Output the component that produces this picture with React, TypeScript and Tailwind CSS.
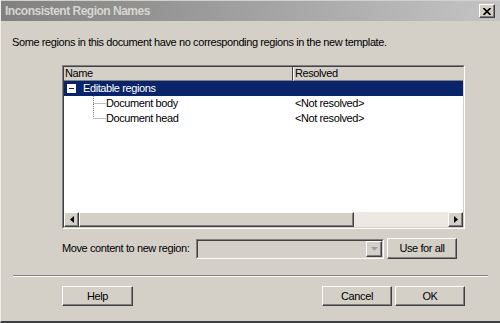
import React from "react";

const raised =
  "border border-t-white border-l-white border-r-[#404040] border-b-[#404040] shadow-[inset_-1px_-1px_0_#808080]";

function Button({ label, className = "" }: { label: string; className?: string }) {
  return (
    <div
      className={`flex items-center justify-center bg-[#d4d0c8] text-[11px] tracking-[-0.4px] text-black ${raised} ${className}`}
    >
      {label}
    </div>
  );
}

function ArrowBtn({ dir }: { dir: "left" | "right" }) {
  return (
    <div className={`w-[15px] h-[15px] flex items-center justify-center bg-[#d4d0c8] ${raised}`}>
      <svg width="4" height="7" viewBox="0 0 4 7">
        {dir === "left" ? (
          <path d="M4 0 L0 3.5 L4 7 Z" fill="#000" />
        ) : (
          <path d="M0 0 L4 3.5 L0 7 Z" fill="#000" />
        )}
      </svg>
    </div>
  );
}

export default function App() {
  return (
    <div
      className="w-[500px] h-[323px] bg-[#d4d0c8] flex flex-col border-l border-l-[#f0eee8] border-b-2 border-b-[#404040] overflow-hidden tracking-[-0.4px]"
      style={{ fontFamily: '"Liberation Sans", Arial, sans-serif' }}
    >
      {/* title bar */}
      <div className="h-[20px] mt-[1px] flex items-center justify-between pl-[4px] pr-[5px] bg-gradient-to-r from-[#808080] to-[#c4c4c4]">
        <span className="text-[12px] font-bold text-[#d8d6d0] tracking-[-0.5px]">
          Inconsistent Region Names
        </span>
        <div className={`w-[16px] h-[14px] bg-[#d4d0c8] flex items-center justify-center ${raised}`}>
          <svg width="8" height="7" viewBox="0 0 8 7">
            <path d="M0.5 0 L7.5 7 M7.5 0 L0.5 7" stroke="#000" strokeWidth="1.6" />
          </svg>
        </div>
      </div>

      <div className="pl-[11px] mt-[15px] text-[11px] leading-[13px] text-black whitespace-nowrap">
        Some regions in this document have no corresponding regions in the new template.
      </div>

      {/* list */}
      <div className="ml-[61px] mt-[16px] w-[403px] h-[164px] border border-t-[#808080] border-l-[#808080] border-r-white border-b-white">
        <div className="w-full h-full border border-t-[#404040] border-l-[#404040] border-r-[#d4d0c8] border-b-[#d4d0c8] bg-white flex flex-col text-[11px] text-black">
          <div className="flex h-[14px] shrink-0 leading-[12px]">
            <div className="w-[229px] bg-[#d4d0c8] border-r border-r-[#404040] border-b border-b-[#808080] pl-[1px]">
              Name
            </div>
            <div className="flex-1 bg-[#d4d0c8] border-b border-b-[#808080] border-l border-l-white pl-[1px]">
              Resolved
            </div>
          </div>
          <div className="flex h-[15px] items-center bg-[#0a246a] text-white shrink-0">
            <div className="w-[229px] flex items-center pl-[3px]">
              <div className="w-[9px] h-[9px] bg-white flex items-center justify-center">
                <div className="w-[5px] h-[1px] bg-[#0a246a]" />
              </div>
              <span className="ml-[7px]">Editable regions</span>
            </div>
          </div>
          <div className="relative flex flex-col">
            <svg className="absolute left-[29px] top-0" width="14" height="23" viewBox="0 0 14 23">
              <path d="M0.5 0 V22.5 M0.5 7.5 H13 M0.5 22.5 H13" stroke="#808080" strokeDasharray="1 1" />
            </svg>
            {["Document body", "Document head"].map((n) => (
              <div key={n} className="flex h-[15px] items-center">
                <div className="w-[229px] pl-[42px]">{n}</div>
                <div className="pl-[2px]">&lt;Not resolved&gt;</div>
              </div>
            ))}
          </div>
          <div className="flex-1" />
          <div className="flex h-[15px] shrink-0">
            <ArrowBtn dir="left" />
            <div className={`w-[275px] h-[15px] bg-[#d4d0c8] ${raised}`} />
            <div className="flex-1 bg-[#ece9e4]" />
            <ArrowBtn dir="right" />
          </div>
        </div>
      </div>

      {/* move content row */}
      <div className="flex items-center mt-[9px] ml-[61px] text-[11px] text-black">
        <span className="w-[134px] whitespace-nowrap">Move content to new region:</span>
        <div className="w-[188px] h-[20px] border border-t-[#808080] border-l-[#808080] border-r-white border-b-white">
          <div className="w-full h-full border border-t-[#404040] border-l-[#404040] border-r-[#d4d0c8] border-b-[#d4d0c8] bg-[#d4d0c8] flex justify-end">
            <div className={`w-[16px] h-full flex items-center justify-center ${raised}`}>
              <svg width="7" height="4" viewBox="0 0 7 4">
                <path d="M0 0 H7 L3.5 4 Z" fill="#a0a0a0" />
              </svg>
            </div>
          </div>
        </div>
        <Button label="Use for all" className="w-[70px] h-[21px] ml-[3px]" />
      </div>

      {/* separator */}
      <div className="mx-[12px] mt-[16px] h-[2px] border-t border-t-[#808080] border-b border-b-white" />

      <div className="flex mt-[9px] ml-[61px] mr-[35px]">
        <Button label="Help" className="w-[71px] h-[20px]" />
        <div className="flex-1" />
        <Button label="Cancel" className="w-[70px] h-[20px]" />
        <Button label="OK" className="w-[70px] h-[20px] ml-[3px]" />
      </div>
    </div>
  );
}
